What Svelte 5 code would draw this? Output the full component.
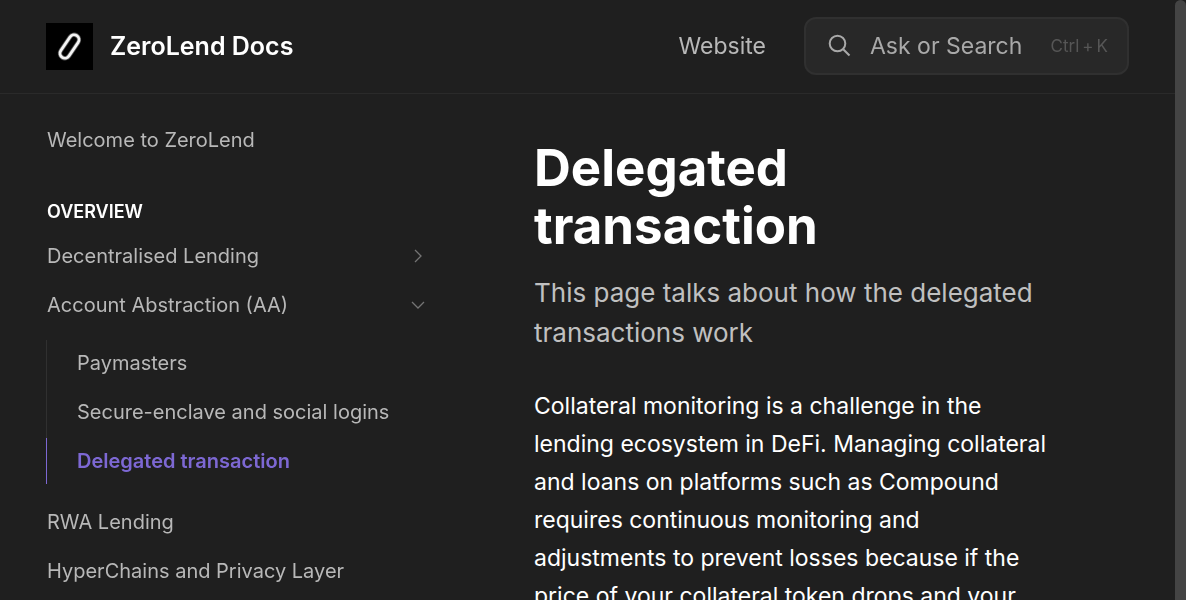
<script>
  const overview = [
    { label: 'Decentralised Lending', icon: 'right' },
    {
      label: 'Account Abstraction (AA)',
      icon: 'down',
      children: [
        { label: 'Paymasters' },
        { label: 'Secure-enclave and social logins' },
        { label: 'Delegated transaction', active: true },
      ],
    },
    { label: 'RWA Lending' },
    { label: 'HyperChains and Privacy Layer' },
  ];
</script>

<div class="page">
  <div class="shell">
    <header>
      <a class="brand" href="#home">
        <svg class="logo" viewBox="0 0 47 47" aria-hidden="true">
          <rect width="47" height="47" fill="#000" />
          <g fill="none" stroke="#f4f4f4" transform="rotate(34 23.5 23.5)">
            <rect x="18.6" y="10.4" width="9.8" height="26.2" rx="4.9" stroke-width="4.4" opacity="0.35" />
            <rect x="18.6" y="10.4" width="9.8" height="26.2" rx="4.9" stroke-width="2.8" />
          </g>
        </svg>
        <span>ZeroLend Docs</span>
      </a>
      <a class="top-link" href="#website">Website</a>
      <button class="search" type="button">
        <svg viewBox="0 0 24 24" aria-hidden="true">
          <circle cx="9.5" cy="9.5" r="7.8" />
          <path d="M15.2 15.2 21.5 21.5" />
        </svg>
        <span class="search-label">Ask or Search</span>
        <span class="keys"><kbd>Ctrl</kbd><span>+</span><kbd>K</kbd></span>
      </button>
    </header>

    <div class="columns">
      <nav aria-label="Table of contents">
        <a class="item" href="#welcome">Welcome to ZeroLend</a>
        <h2>Overview</h2>
        <ul>
          {#each overview as entry}
            <li>
              <a class="item" href="#page">
                <span>{entry.label}</span>
                {#if entry.icon}
                  <svg class="chevron" viewBox="0 0 16 16" aria-hidden="true">
                    <path d={entry.icon === 'right' ? 'M5 2 11 8 5 14' : 'M2 5 8 11 14 5'} />
                  </svg>
                {/if}
              </a>
              {#if entry.children}
                <ul class="sub">
                  {#each entry.children as child}
                    <li><a class="item" class:active={child.active} href="#page">{child.label}</a></li>
                  {/each}
                </ul>
              {/if}
            </li>
          {/each}
        </ul>
      </nav>

      <main>
        <h1>Delegated transaction</h1>
        <p class="lead">This page talks about how the delegated transactions work</p>
        <p class="body">
          Collateral monitoring is a challenge in the lending ecosystem in DeFi. Managing collateral
          and loans on platforms such as Compound requires continuous monitoring and adjustments to
          prevent losses because if the price of your collateral token drops and your
        </p>
      </main>
    </div>
  </div>
  <div class="track"><div class="thumb"></div></div>
</div>

<style>
  :global(body) {
    margin: 0;
    background: #1f1f1f;
  }
  .page {
    display: flex;
    height: 100vh;
    overflow: hidden;
    background: #1f1f1f;
    color: #fff;
    font-family: Inter, "Liberation Sans", sans-serif;
  }
  .shell {
    flex: 1;
    min-width: 0;
  }
  a {
    color: inherit;
    text-decoration: none;
  }
  header {
    display: flex;
    align-items: center;
    padding: 17px 46px 18px;
    border-bottom: 1px solid #2a2a2a;
    will-change: transform;
  }
  .brand {
    display: flex;
    align-items: center;
    gap: 17px;
    margin-right: auto;
    font-size: 25px;
    line-height: 36px;
    font-weight: 600;
  }
  .logo {
    width: 47px;
    height: 47px;
  }
  .top-link {
    margin-right: 38px;
    font-size: 23px;
    color: #b8b8b8;
  }
  .search {
    box-sizing: border-box;
    display: flex;
    align-items: center;
    width: 325px;
    height: 58px;
    padding: 0 19px 0 22px;
    border: 2px solid #303030;
    border-radius: 12px;
    background: #282828;
    font: inherit;
    font-size: 23px;
    color: #a9a9a9;
  }
  .search svg {
    width: 24px;
    height: 24px;
    margin-right: 18px;
    fill: none;
    stroke: #a9a9a9;
    stroke-width: 2;
  }
  .keys {
    display: flex;
    gap: 3px;
    margin-left: auto;
    font-size: 17px;
    color: #565656;
  }
  kbd {
    font-family: inherit;
    font-size: inherit;
  }
  .columns {
    display: grid;
    grid-template-columns: 394px minmax(0, 1fr);
    column-gap: 94px;
    padding: 0 120px 0 46px;
  }
  nav {
    padding-top: 23px;
    font-size: 20px;
    color: #b8b8b8;
    will-change: transform;
  }
  .item {
    display: flex;
    align-items: center;
    justify-content: space-between;
    padding: 8px 14px 8px 1px;
    line-height: 30px;
  }
  h2 {
    margin: 36px 0 8px 1px;
    font-size: 18px;
    line-height: 26px;
    font-weight: 600;
    text-transform: uppercase;
    color: #fff;
  }
  ul {
    display: flex;
    flex-direction: column;
    gap: 3px;
    margin: 0;
    padding: 0;
    list-style: none;
  }
  .sub {
    margin: 12px 0 12px;
    border-left: 1px solid #303030;
  }
  .sub .item {
    margin-left: -1px;
    padding-left: 30px;
    border-left: 1px solid transparent;
  }
  .sub .active {
    border-left-color: #7d68d3;
    color: #7d68d3;
    font-weight: 600;
  }
  .chevron {
    width: 16px;
    height: 16px;
    fill: none;
    stroke: #747474;
    stroke-width: 1.3;
  }
  main {
    padding-top: 45px;
  }
  h1 {
    max-width: 400px;
    margin: 0;
    font-size: 51px;
    line-height: 58px;
    font-weight: 700;
  }
  p {
    margin: 0;
  }
  .lead {
    margin-top: 18px;
    font-size: 26px;
    line-height: 40px;
    color: #c0c0c0;
  }
  .body {
    margin-top: 34px;
    font-size: 23px;
    line-height: 38px;
  }
  .track {
    width: 11px;
  }
  .thumb {
    height: 100%;
    border-radius: 6px 6px 0 0;
    background: #444;
  }
</style>
